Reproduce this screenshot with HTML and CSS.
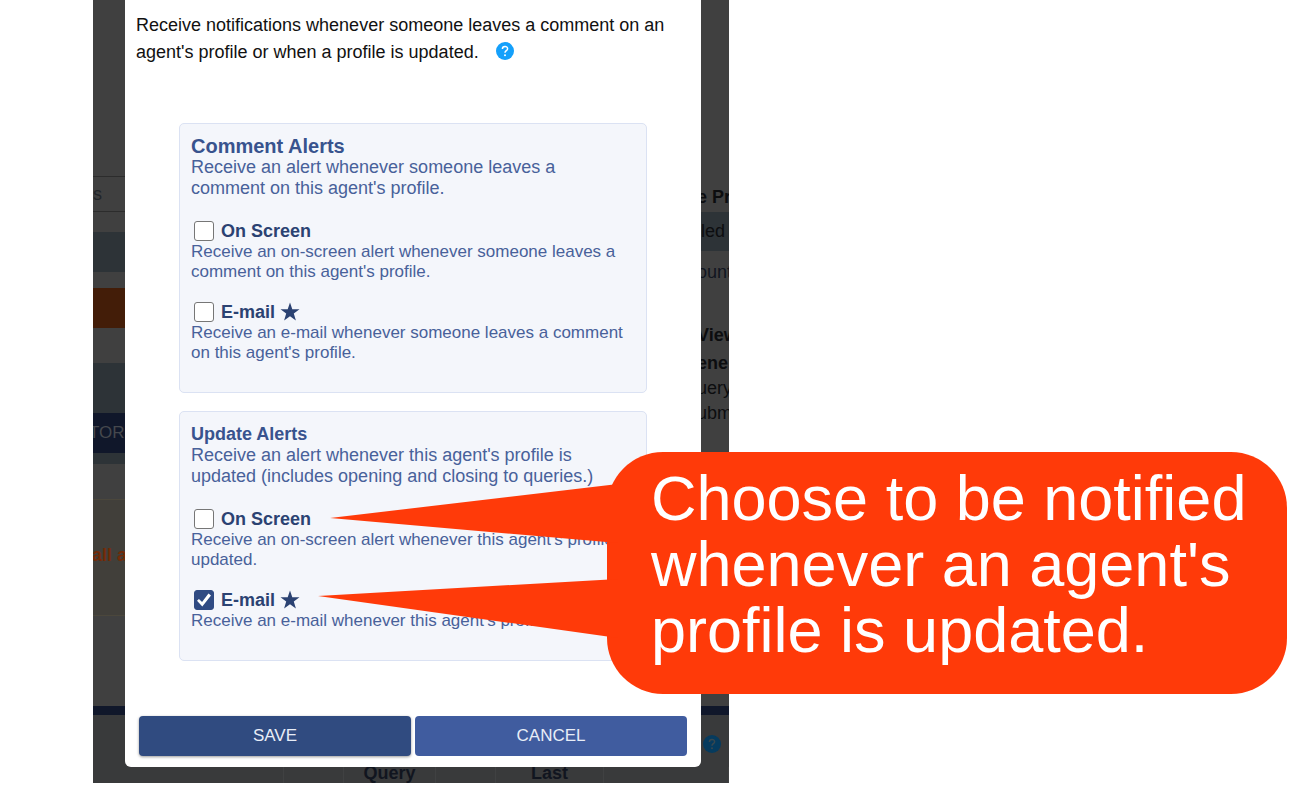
FILE: index.html
```
<!DOCTYPE html>
<html lang="en">
<head>
	<meta charset="utf-8">
	<meta name="viewport" content="width=device-width, initial-scale=1">
	<title>Alert Settings</title>
	<link rel="stylesheet" href="styles.css">
</head>
<body>
	<div class="screen">
		<div class="backdrop">
			<div class="strip strip-left">
				<div class="plain top"></div>
				<div class="field">s</div>
				<div class="plain gap-a"></div>
				<div class="slate row"></div>
				<div class="plain gap-b"></div>
				<div class="orange row"></div>
				<div class="plain gap-c"></div>
				<div class="slate tall"></div>
				<div class="navy tab">TORE</div>
				<div class="slate thin"></div>
				<div class="plain gap-d"></div>
				<div class="cream">all a</div>
				<div class="plain fill"></div>
				<div class="navy rule"></div>
				<div class="table-bg"></div>
			</div>

			<main class="dialog-cell">
				<form class="dialog">
					<p class="intro">Receive notifications whenever someone leaves a comment on an agent's profile or when a profile is updated.
						<svg class="help" viewBox="0 0 18 18" role="img" aria-label="Help">
							<circle cx="9" cy="9" r="9" fill="#14a0fb"/>
							<path d="M6.4 7C6.4 3.7 11.6 3.7 11.6 6.7C11.6 8.7 9 8.7 9 10.8" fill="none" stroke="#fff" stroke-width="1.5"/>
							<circle cx="9" cy="13.3" r="1" fill="#fff"/>
						</svg>
					</p>

					<section class="panel">
						<h2 class="large">Comment Alerts</h2>
						<p class="lead">Receive an alert whenever someone leaves a<br>comment on this agent's profile.</p>
						<div class="option">
							<label><input type="checkbox" name="comment-screen">On Screen</label>
							<p>Receive an on-screen alert whenever someone leaves a comment on this agent's profile.</p>
						</div>
						<div class="option">
							<label><input type="checkbox" name="comment-email">E-mail
								<svg class="star" viewBox="0 0 20 20" aria-hidden="true"><path d="M10 0.5L12.3 7.2H19.5L13.8 11.5L15.9 18.5L10 14.3L4.1 18.5L6.2 11.5L0.5 7.2H7.7Z" fill="#2b4272"/></svg>
							</label>
							<p>Receive an e-mail whenever someone leaves a comment on this agent's profile.</p>
						</div>
					</section>

					<section class="panel">
						<h2>Update Alerts</h2>
						<p class="lead">Receive an alert whenever this agent's profile is updated (includes opening and closing to queries.)</p>
						<div class="option">
							<label><input type="checkbox" name="update-screen">On Screen</label>
							<p>Receive an on-screen alert whenever this agent's profile is updated.</p>
						</div>
						<div class="option">
							<label><input type="checkbox" name="update-email" checked>E-mail
								<svg class="star" viewBox="0 0 20 20" aria-hidden="true"><path d="M10 0.5L12.3 7.2H19.5L13.8 11.5L15.9 18.5L10 14.3L4.1 18.5L6.2 11.5L0.5 7.2H7.7Z" fill="#2b4272"/></svg>
							</label>
							<p>Receive an e-mail whenever this agent's profile is updated.</p>
						</div>
					</section>

					<div class="buttons">
						<button type="submit" class="save">SAVE</button>
						<button type="button" class="cancel">CANCEL</button>
					</div>
				</form>
			</main>

			<div class="strip strip-right">
				<div class="plain heading"><b>e Pr</b></div>
				<div class="slate led">led</div>
				<div class="plain count">ount</div>
				<div class="plain views"><b>View</b></div>
				<div class="plain lines"><b>ene</b><span>uery</span><span>ubm</span></div>
				<div class="plain fill"></div>
				<div class="navy rule"></div>
				<div class="table-bg">
					<svg class="help" viewBox="0 0 18 18" aria-hidden="true">
						<circle cx="9" cy="9" r="9" fill="#063b5e"/>
						<path d="M6.4 7C6.4 3.7 11.6 3.7 11.6 6.7C11.6 8.7 9 8.7 9 10.8" fill="none" stroke="#38474f" stroke-width="1.5"/>
						<circle cx="9" cy="13.3" r="1" fill="#38474f"/>
					</svg>
				</div>
			</div>
		</div>

		<div class="table-head">
			<span></span><span></span><span>Query</span><span></span><span>Last</span><span></span>
		</div>

		<aside class="callout">
			<svg class="tails" viewBox="0 0 300 160" aria-hidden="true">
				<path d="M12 34L300 0V59Z" fill="#ff3a09"/>
				<path d="M0 112L300 95V154Z" fill="#ff3a09"/>
			</svg>
			<p>Choose to be notified whenever an agent's profile is updated.</p>
		</aside>
	</div>
</body>
</html>
```
FILE: styles.css
```
* {
	box-sizing: border-box;
}

body {
	margin: 0;
	background-color: #fff;
	font-family: "Liberation Sans", Arial, sans-serif;
	font-size: 18px;
	color: #111;
}

h2, p {
	margin: 0;
}

.screen {
	position: relative;
	max-width: 636px;
	margin-left: 93px;
}

/* dimmed page behind the dialog */
.backdrop {
	display: grid;
	grid-template-columns: 32px 1fr 28px;
}

.strip {
	display: flex;
	flex-direction: column;
	overflow: hidden;
	white-space: nowrap;
	background-color: #404040;
}

.strip > div {
	flex: none;
}

.strip > .fill {
	flex: 1;
}

.slate {
	background-color: #2d3337;
}

.orange {
	background-color: #431d08;
}

.navy {
	background-color: #10172a;
}

.top {
	height: 176px;
}

.field {
	height: 36px;
	line-height: 34px;
	border-top: 1px solid #2c2c2c;
	border-bottom: 1px solid #2c2c2c;
	color: #22252a;
}

.gap-a {
	height: 20px;
}

.row {
	height: 40px;
}

.gap-b {
	height: 16px;
}

.gap-c {
	height: 35px;
}

.tall {
	height: 50px;
}

.tab {
	height: 40px;
	line-height: 40px;
	font-size: 17px;
	text-indent: -4px;
	color: #45484d;
}

.thin {
	height: 11px;
}

.gap-d {
	height: 35px;
}

.cream {
	height: 117px;
	line-height: 110px;
	border: solid #4b473c;
	border-width: 1px 0;
	background-color: #413f3a;
	color: #732b08;
	font-weight: bold;
	text-indent: -1px;
}

.rule {
	height: 9px;
}

.table-bg {
	height: 52px;
	padding: 20px 2px;
	background-color: #393a3b;
}

.strip-right {
	color: #0c0d0f;
	text-indent: -4px;
}

.heading {
	height: 212px;
	padding-top: 187px;
}

.led {
	height: 39px;
	line-height: 38px;
	text-indent: 0;
}

.count {
	height: 74px;
	line-height: 42px;
	color: #11151f;
}

.views {
	height: 26px;
}

.lines b, .lines span {
	display: block;
	line-height: 25px;
}

.table-head {
	display: grid;
	grid-template-columns: 191px 60px 92px 60px 108px 1fr;
	height: 16px;
	overflow: hidden;
	background-color: #393a3b;
	color: #11151f;
	font-weight: bold;
	line-height: 12px;
	text-align: center;
}

.table-head span {
	border-right: 1px solid #404142;
}

/* dialog */
.dialog-cell {
	background-color: #393a3b;
}

.dialog {
	padding: 12px 14px 11px;
	background-color: #fff;
	border-radius: 0 0 6px 6px;
}

.intro {
	margin: 0 -3px 57px;
	line-height: 27px;
}

.help {
	display: block;
	width: 18px;
	height: 18px;
}

.intro .help {
	display: inline-block;
	margin-left: 12px;
	vertical-align: -2px;
}

.panel {
	margin: 0 40px 18px;
	padding: 12px 6px 29px 11px;
	border: 1px solid #dbe2f3;
	border-radius: 5px;
	background-color: #f4f6fb;
	color: #48619a;
}

.panel h2 {
	font-size: 18px;
	line-height: 21px;
	color: #38538e;
}

.panel .large {
	font-size: 20px;
}

.lead {
	line-height: 21px;
}

.option {
	margin-top: 19px;
	font-size: 17px;
	line-height: 20px;
}

.lead + .option {
	margin-top: 21px;
}

.option label {
	display: flex;
	align-items: center;
	height: 22px;
	padding-left: 3px;
	font-size: 18px;
	font-weight: bold;
	color: #2b4272;
}

.option input {
	appearance: none;
	display: grid;
	place-content: center;
	width: 20px;
	height: 20px;
	margin: 0 7px 0 0;
	border: 1px solid #767676;
	border-radius: 3px;
	background-color: #fff;
}

.option input:checked {
	border-color: #304b83;
	background-color: #304b83;
}

.option input:checked::before {
	content: "";
	width: 14px;
	height: 14px;
	background-color: #fff;
	clip-path: polygon(0 56%, 14% 42%, 36% 64%, 82% 4%, 100% 18%, 38% 96%);
}

.star {
	width: 20px;
	height: 20px;
	margin-left: 5px;
}

.buttons {
	display: grid;
	grid-template-columns: 1fr 1fr;
	gap: 4px;
	margin-top: 55px;
}

.buttons button {
	height: 40px;
	border: 0;
	border-radius: 4px;
	font: 17px "Liberation Sans", Arial, sans-serif;
	color: #e8edf7;
}

.buttons .save {
	background-color: #304b80;
	box-shadow: 0 1px 3px rgba(0, 0, 0, 0.4);
}

.buttons .cancel {
	background-color: #405c9f;
}

/* speech bubble over the dialog */
.callout {
	position: absolute;
	top: 452px;
	left: 514px;
	width: 680px;
	padding: 13px 24px 31px 44px;
	border-radius: 56px;
	background-color: #ff3a09;
	color: #fff;
	font-size: 63px;
	line-height: 66px;
}

.tails {
	position: absolute;
	top: 32px;
	left: -289px;
	width: 300px;
	height: 160px;
}
```
